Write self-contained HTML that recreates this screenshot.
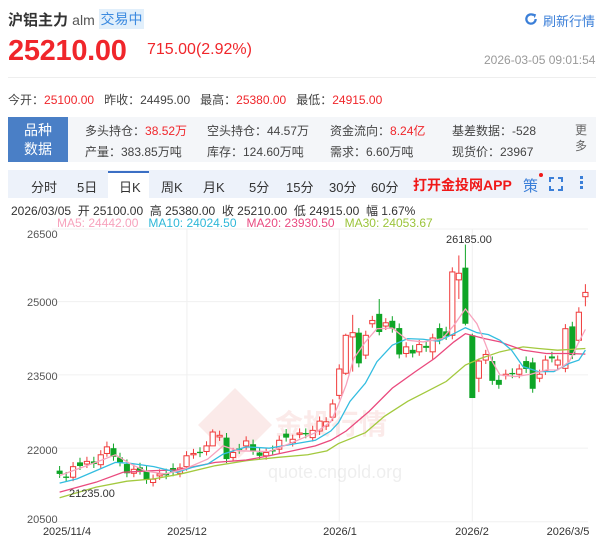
<!DOCTYPE html>
<html><head><meta charset="utf-8">
<style>
*{margin:0;padding:0;box-sizing:border-box}
body{width:600px;height:537px;background:#fff;font-family:"Liberation Sans","Noto Sans CJK SC",sans-serif;color:#333;position:relative;overflow:hidden}
.a{position:absolute;white-space:nowrap}
.red{color:#f0262b}
</style></head><body>
<div class="a" style="left:8px;top:9px;font-size:15px;font-weight:bold;color:#333">沪铝主力 <span style="font-weight:normal;color:#555;font-size:14px">alm</span></div>
<div class="a" style="left:99px;top:9px;width:45px;height:20px;background:#e1effb;color:#3b8ae0;font-size:14px;line-height:20px;text-align:center">交易中</div>
<svg class="a" style="left:524px;top:12px" width="14" height="14" viewBox="0 0 15 15"><path d="M12.5 7.5A5 5 0 1 1 10.5 3.5" fill="none" stroke="#3b7fd8" stroke-width="2.4"/><path d="M9 1.5L13 2.5L11.5 6.5Z" fill="#3b7fd8"/></svg>
<div class="a" style="left:543px;top:11px;font-size:13px;color:#3b7fd8">刷新行情</div>
<div class="a red" style="left:8px;top:35px;font-size:29px;font-weight:bold;letter-spacing:-0.3px">25210.00</div>
<div class="a red" style="left:147px;top:41px;font-size:16px">715.00(2.92%)</div>
<div class="a" style="left:484px;top:53px;font-size:12px;color:#999">2026-03-05 09:01:54</div>
<div class="a" style="left:8px;top:77px;width:588px;height:1px;background:#eee"></div>
<div class="a" style="left:8px;top:91px;font-size:12px;color:#444">今开：<span class="red">25100.00</span>&nbsp;&nbsp;&nbsp;昨收：24495.00&nbsp;&nbsp;&nbsp;最高：<span class="red">25380.00</span>&nbsp;&nbsp;&nbsp;最低：<span class="red">24915.00</span></div>
<div class="a" style="left:8px;top:117px;width:588px;height:45px;background:#f4f6f9"></div>
<div class="a" style="left:8px;top:117px;width:60px;height:45px;background:#4a7fc6;color:#fff;font-size:14px;line-height:19px;text-align:center;padding-top:4px">品种<br>数据</div>
<div class="a" style="left:85px;top:121px;font-size:12px;color:#444;line-height:21px">多头持仓：<span class="red">38.52万</span><br>产量：383.85万吨</div>
<div class="a" style="left:207px;top:121px;font-size:12px;color:#444;line-height:21px">空头持仓：44.57万<br>库存：124.60万吨</div>
<div class="a" style="left:330px;top:121px;font-size:12px;color:#444;line-height:21px">资金流向：<span class="red">8.24亿</span><br>需求：6.60万吨</div>
<div class="a" style="left:452px;top:121px;font-size:12px;color:#444;line-height:21px">基差数据：-528<br>现货价：23967</div>
<div class="a" style="left:575px;top:122px;font-size:12px;color:#666;line-height:16px;width:14px">更<br>多</div>
<div class="a" style="left:8px;top:170px;width:588px;height:28px;background:#edf2fa"></div>
<div class="a" style="left:108px;top:171px;width:41px;height:27px;background:#fff;border-top:2px solid #3b6fc4"></div>
<div class="a" style="left:0;top:177px;font-size:13px;color:#333;width:600px">
<span class="a" style="left:31px">分时</span><span class="a" style="left:77px">5日</span><span class="a" style="left:119px">日K</span><span class="a" style="left:161px">周K</span><span class="a" style="left:203px">月K</span><span class="a" style="left:249px">5分</span><span class="a" style="left:286px">15分</span><span class="a" style="left:329px">30分</span><span class="a" style="left:371px">60分</span></div>
<div class="a red" style="left:413px;top:175px;font-size:14px;font-weight:bold;color:#f01818">打开金投网APP</div>
<div class="a" style="left:523px;top:175px;font-size:15px;color:#3b7fd8">策</div>
<div class="a" style="left:539px;top:173px;width:4px;height:4px;border-radius:2px;background:#f01818"></div>
<svg class="a" style="left:549px;top:177px" width="14" height="14" viewBox="0 0 14 14" fill="none" stroke="#3b7fd8" stroke-width="2"><path d="M1 5V1H5M9 1H13V5M13 9V13H9M5 13H1V9"/></svg>
<div class="a" style="left:580px;top:176px;width:3px;height:3px;background:#3b7fd8;box-shadow:0 5px 0 #3b7fd8,0 10px 0 #3b7fd8"></div>
<div class="a" style="left:11px;top:202px;font-size:12px;color:#333">2026/03/05 &nbsp;开 25100.00 &nbsp;高 25380.00 &nbsp;收 25210.00 &nbsp;低 24915.00 &nbsp;幅 1.67%</div>
<div class="a" style="left:57px;top:216px;font-size:12px"><span style="color:#f7a3bd">MA5: 24442.00</span>&nbsp;&nbsp;&nbsp;<span style="color:#2fb8d8">MA10: 24024.50</span>&nbsp;&nbsp;&nbsp;<span style="color:#e94a80">MA20: 23930.50</span>&nbsp;&nbsp;&nbsp;<span style="color:#9bc43a">MA30: 24053.67</span></div>
<svg id="c" class="a" style="left:0;top:0" width="600" height="537"></svg>
<script>
var s=document.getElementById('c'),h='';
function X(z){return z/2.6}function Y(z){return 200+z/3.03}
[88,308,530,752,975].forEach(function(g){h+='<line x1="52" x2="588" y1="'+Y(g)+'" y2="'+Y(g)+'" stroke="#f0f0f0"/>'});
[486,882,1228].forEach(function(g){h+='<line x1="'+X(g)+'" x2="'+X(g)+'" y1="229" y2="522" stroke="#f0f0f0"/>'});
h+='<g opacity="0.1"><path d="M235 388L272 425L235 462L198 425Z" fill="#e04030"/><text x="275" y="434" font-size="28" font-weight="bold" fill="#e04030" font-family="Liberation Sans,Noto Sans CJK SC,sans-serif">金投行情</text><text x="268" y="478" font-size="18" fill="#666" font-family="Liberation Sans,sans-serif">quote.cngold.org</text><text x="222" y="464" font-size="14" fill="#fff" font-family="Liberation Sans">Au</text></g>';
var d=[[155,820,830,'g'],[172,838,842,'g'],[190,840,808,'r'],[208,795,806,'g'],[226,792,800,'r'],[244,792,800,'g'],[262,802,772,'r'],[278,768,748,'r'],[295,752,778,'g'],[312,780,795,'g'],[330,800,828,'g'],[348,828,816,'r'],[364,810,820,'g'],[381,820,848,'g'],[398,856,846,'r'],[415,836,830,'r'],[432,828,834,'g'],[450,812,825,'g'],[468,828,812,'r'],[485,808,775,'r'],[503,772,768,'r'],[520,763,767,'g'],[537,762,745,'r'],[553,745,703,'r'],[571,718,713,'r'],[589,720,785,'g'],[606,780,765,'r'],[622,753,757,'g'],[640,745,730,'r'],[658,740,760,'g'],[675,765,775,'g'],[692,775,765,'r'],[709,758,762,'g'],[726,755,728,'r'],[744,708,720,'g'],[761,735,725,'r'],[779,710,706,'r'],[795,706,710,'g'],[813,720,698,'r'],[831,700,670,'r'],[848,685,672,'r'],[865,658,618,'r'],[882,592,512,'r'],[899,525,410,'r'],[917,415,402,'r'],[933,402,495,'g'],[951,470,410,'r'],[968,375,365,'r'],[986,345,400,'g'],[1003,382,372,'r'],[1020,366,390,'g'],[1038,388,468,'g'],[1056,465,445,'r'],[1073,454,465,'g'],[1090,460,438,'r'],[1108,442,448,'g'],[1125,460,418,'r'],[1143,388,425,'g'],[1160,398,412,'g'],[1176,410,218,'r'],[1193,242,222,'r'],[1210,205,375,'g'],[1228,410,600,'g'],[1245,540,488,'r'],[1263,485,468,'r'],[1280,488,548,'g'],[1297,545,560,'g'],[1315,532,528,'r'],[1332,524,528,'g'],[1350,528,512,'r'],[1368,488,512,'g'],[1385,492,572,'g'],[1403,540,528,'r'],[1418,518,485,'r'],[1435,474,480,'g'],[1450,500,485,'r'],[1470,510,390,'r'],[1488,383,470,'g'],[1505,425,340,'r'],[1522,293,280,'r']];
var wk={1210:[135,380],1193:[168,300],899:[405,530],917:[348,520],986:[300,410],1228:[405,600],1125:[405,485],1505:[325,432],1522:[255,322],1245:[480,582],830:[610,730],278:[732,778],553:[695,720]};
d.forEach(function(c){var x=X(c[0]),t=Math.min(c[1],c[2]),b=Math.max(c[1],c[2]),w=wk[c[0]]||[t-14,b+12],col=c[3]=='r'?'#f03a3a':'#0ea526';
h+='<line x1="'+x+'" x2="'+x+'" y1="'+Y(w[0])+'" y2="'+Y(w[1])+'" stroke="'+col+'"/>';
var yt=Y(t),hh=Math.max(1.2,Y(b)-yt);
if(c[3]=='r')h+='<rect x="'+(x-2.6)+'" y="'+yt+'" width="5.2" height="'+hh+'" fill="#fff" stroke="'+col+'" stroke-width="1"/>';
else h+='<rect x="'+(x-3)+'" y="'+yt+'" width="6" height="'+hh+'" fill="'+col+'"/>';});
function L(p,c){var q=[];for(var i=0;i<p.length;i+=2)q.push(X(p[i])+','+Y(p[i+1]));h+='<polyline points="'+q.join(' ')+'" fill="none" stroke="'+c+'" stroke-width="1.3"/>'}
L([155,902,250,870,330,852,400,845,470,830,560,805,640,790,720,780,800,772,850,760,880,738,950,705,1000,655,1060,610,1110,580,1160,550,1210,500,1250,480,1300,460,1360,445,1400,450,1450,455,1522,450],'#a3c93e');
L([155,885,250,855,320,825,400,820,460,818,560,795,640,788,700,775,760,760,820,745,860,728,900,700,960,640,1020,570,1080,520,1130,480,1180,430,1210,405,1260,420,1300,430,1360,455,1420,465,1480,465,1522,467],'#ea4a7e');
L([155,858,200,845,250,820,300,795,340,798,400,808,460,825,500,810,540,800,580,770,640,748,700,752,760,740,820,728,860,700,880,675,910,610,950,555,980,490,1020,440,1060,420,1100,422,1140,428,1180,405,1210,387,1240,402,1270,408,1300,425,1330,455,1360,505,1400,520,1440,520,1480,495,1505,485,1522,455],'#33bde0');
L([155,835,260,790,300,772,340,800,380,822,430,830,480,815,540,785,580,745,620,760,700,762,760,735,820,705,860,672,880,620,900,560,920,480,950,430,980,390,1020,388,1060,425,1100,430,1150,420,1180,380,1210,330,1240,375,1260,430,1280,490,1300,530,1340,535,1380,528,1420,515,1450,515,1480,490,1505,430,1522,392],'#f7a3bd');
var T=function(x,y,t,a,c){h+='<text x="'+x+'" y="'+y+'" font-size="11" fill="'+(c||'#555')+'" text-anchor="'+(a||'start')+'" font-family="Liberation Sans,sans-serif">'+t+'</text>'};
T(27,238,'26500');T(27,306,'25000');T(27,380,'23500');T(27,454,'22000');T(27,523,'20500');
T(446,243,'26185.00',0,'#333');T(69,497,'21235.00',0,'#333');
T(67,535,'2025/11/4','middle','#333');T(187,535,'2025/12','middle','#333');T(340,535,'2026/1','middle','#333');T(472,535,'2026/2','middle','#333');T(568,535,'2026/3/5','middle','#333');
s.innerHTML=h;
</script>
</body></html>
